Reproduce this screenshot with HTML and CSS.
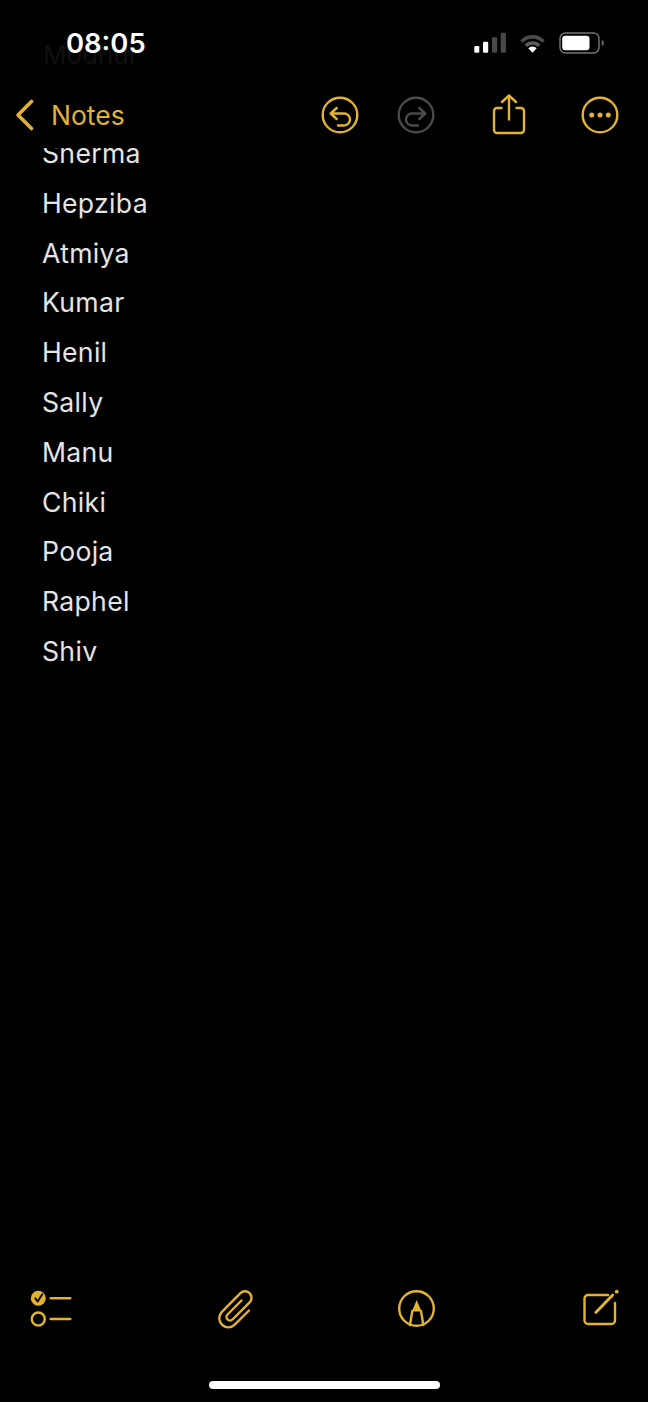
FILE: index.html
```html
<!DOCTYPE html>
<html lang="en">
<head>
  <meta charset="UTF-8">
  <title>Notes</title>
  <link rel="stylesheet" href="styles.css">
</head>
<body>

  <!-- row scrolled away, barely visible under the blurred bar -->
  <div class="ghost-row">Modhur</div>

  <header class="status-bar">
    <span class="time">08:05</span>
    <div class="status-icons">
      <svg class="signal" width="32" height="22" viewBox="0 0 32 22">
        <rect x="0.3" y="14" width="5" height="6.8" rx="1.2" fill="#fff"/>
        <rect x="9" y="9.7" width="5.2" height="11.1" rx="1.2" fill="#fff"/>
        <rect x="18" y="5.3" width="5.2" height="15.5" rx="1.2" fill="#484848"/>
        <rect x="26.7" y="0.7" width="5.2" height="20.1" rx="1.2" fill="#484848"/>
      </svg>
      <svg class="wifi" width="28" height="22" viewBox="0 0 28 22" fill="none">
        <path d="M2.5 9.5A15.5 15.5 0 0 1 24.5 9.5" stroke="#4a4a4a" stroke-width="3.6"/>
        <path d="M6.8 13.8A9.5 9.5 0 0 1 20.2 13.8" stroke="#5a5a5a" stroke-width="3.6"/>
        <path d="M13.5 20.7L9.3 16.2A6 6 0 0 1 17.7 16.2Z" fill="#fff"/>
      </svg>
      <svg class="battery" width="45" height="22" viewBox="0 0 45 22" fill="none">
        <rect x="1" y="1" width="39" height="20" rx="5.5" stroke="#777" stroke-width="1.4"/>
        <rect x="3.2" y="3.7" width="27.3" height="14.6" rx="3" fill="#fff"/>
        <path d="M42.7 8V14C44.2 13.5 45 12.4 45 11S44.2 8.5 42.7 8Z" fill="#666"/>
      </svg>
    </div>
  </header>

  <nav class="nav-bar">
    <a class="back-link">
      <svg width="20" height="34" viewBox="0 0 20 34" fill="none">
        <path d="M16.5 3.5L3 17L16.5 30.5" stroke="#e2b233" stroke-width="3.6" stroke-linecap="round" stroke-linejoin="round"/>
      </svg>
      <span>Notes</span>
    </a>
    <div class="nav-actions">
      <svg class="icon" width="40" height="44" viewBox="0 0 40 44">
        <circle cx="20" cy="22" r="17.3"/>
        <path d="M16.7 15L10.7 20.5L16.7 26M10.7 20.5H24A6 6 0 0 1 24 32.5H18"/>
      </svg>
      <svg class="icon icon-off" width="40" height="44" viewBox="0 0 40 44">
        <circle cx="20" cy="22" r="17.3"/>
        <path d="M23.3 15L29.3 20.5L23.3 26M29.3 20.5H16A6 6 0 0 0 16 32.5H22"/>
      </svg>
      <svg class="icon" width="40" height="44" viewBox="0 0 40 44">
        <path d="M12.5 15H8A3 3 0 0 0 5 18V37A3 3 0 0 0 8 40H32A3 3 0 0 0 35 37V18A3 3 0 0 0 32 15H27.5"/>
        <path d="M20 26.5V3M13 9L20 2.5L27 9"/>
      </svg>
      <svg class="icon" width="40" height="44" viewBox="0 0 40 44">
        <circle cx="20" cy="22" r="17.3"/>
        <circle class="dot" cx="11.7" cy="22" r="2.5"/>
        <circle class="dot" cx="20" cy="22" r="2.5"/>
        <circle class="dot" cx="28.3" cy="22" r="2.5"/>
      </svg>
    </div>
  </nav>

  <main class="note">
    <div class="note-lines">
      <div class="line">Sherma</div>
      <div class="line">Hepziba</div>
      <div class="line">Atmiya</div>
      <div class="line">Kumar</div>
      <div class="line">Henil</div>
      <div class="line">Sally</div>
      <div class="line">Manu</div>
      <div class="line">Chiki</div>
      <div class="line">Pooja</div>
      <div class="line">Raphel</div>
      <div class="line">Shiv</div>
    </div>
  </main>

  <footer class="tool-bar">
    <svg class="icon" width="44" height="44" viewBox="0 0 44 44">
      <circle class="dot" cx="9.3" cy="11.3" r="7.5"/>
      <path class="tick" d="M6.3 11.3L8.6 14.6L13.3 7.3"/>
      <circle cx="9.3" cy="32" r="6.5"/>
      <path d="M21.7 11.3H41.3M21.7 32H41.3"/>
    </svg>
    <svg class="icon" width="44" height="44" viewBox="0 0 44 44">
      <path d="M36 23.5L21.7 37.7A9 9 0 0 1 8.9 24.9L27.4 6.1A6.5 6.5 0 0 1 36.6 15.3L19.5 32.5A3.5 3.5 0 0 1 14.5 27.5L28.5 13.5"/>
    </svg>
    <svg class="icon" width="44" height="44" viewBox="0 0 44 44">
      <circle cx="22.5" cy="21.5" r="17.3"/>
      <path class="dot" d="M22.7 13L17.8 24.5H27.5Z"/>
      <path d="M18.3 24L16 38M27 24L29.3 38"/>
    </svg>
    <svg class="icon" width="44" height="44" viewBox="0 0 44 44">
      <path d="M29 8H9A3.5 3.5 0 0 0 5.5 11.5V33.5A3.5 3.5 0 0 0 9 37H32.5A3.5 3.5 0 0 0 36 33.5V16"/>
      <path class="pencil" d="M17 25.3L33.5 8.2"/>
      <circle class="dot" cx="37.7" cy="4.7" r="1.9"/>
    </svg>
  </footer>

  <div class="home-area">
    <div class="home-indicator"></div>
  </div>

</body>
</html>
```

FILE: styles.css
```css
html, body {
  margin: 0;
  height: 100%;
}
body {
  position: relative;
  display: flex;
  flex-direction: column;
  height: 1402px;
  overflow: hidden;
  background-color: #000;
  font-family: Inter, "Liberation Sans", sans-serif;
}
svg {
  display: block;
}
.ghost-row {
  position: absolute;
  top: 35px;
  left: 43px;
  line-height: 40px;
  font-size: 26px;
  color: #101010;
}
.status-bar {
  position: relative;
  display: flex;
  align-items: center;
  justify-content: space-between;
  height: 86px;
  padding: 0 44px 0 66px;
  box-sizing: border-box;
}
.time {
  font-size: 27.4px;
  font-weight: 600;
  color: #fff;
}
.status-icons {
  display: flex;
  align-items: center;
}
.signal {
  margin-right: 13px;
}
.wifi {
  margin-right: 12px;
}
.nav-bar {
  position: relative;
  display: flex;
  align-items: center;
  justify-content: space-between;
  height: 62px;
  padding: 0 28px 5px 15px;
  box-sizing: border-box;
}
.back-link {
  display: flex;
  align-items: center;
  gap: 16px;
  font-size: 26.5px;
  color: #e2b233;
}
.nav-actions {
  display: grid;
  grid-template-columns: 76px 93px 91px 40px;
}
.icon {
  fill: none;
  stroke: #e2b233;
  stroke-width: 2.4;
  stroke-linecap: round;
  stroke-linejoin: round;
}
.icon-off {
  stroke: #4b4b4b;
}
.dot {
  fill: #e2b233;
  stroke: none;
}
.tick {
  stroke: #000;
  stroke-width: 1.8;
}
.pencil {
  stroke-width: 3;
}
.note {
  flex: 1;
  overflow: hidden;
}
.note-lines {
  margin-top: -19px;
  padding-left: 42px;
}
.line {
  height: 49.8px;
  line-height: 49.8px;
  font-size: 26.6px;
  letter-spacing: 0.3px;
  color: #e4e4e4;
}
.tool-bar {
  display: grid;
  grid-template-columns: 184px 181px 185px 44px;
  align-items: center;
  height: 68px;
  padding-left: 29px;
}
.home-area {
  height: 59px;
  padding-top: 38px;
  box-sizing: border-box;
}
.home-indicator {
  width: 231px;
  height: 8px;
  margin-left: 209px;
  border-radius: 4px;
  background-color: #fff;
}
```
